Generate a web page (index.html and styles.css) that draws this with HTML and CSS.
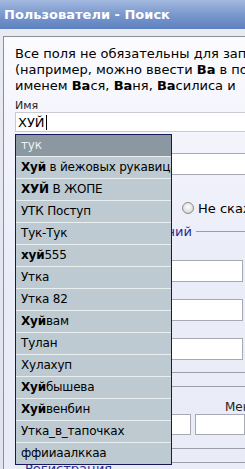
FILE: index.html
```html
<!DOCTYPE html>
<html lang="ru">
<head>
    <meta charset="UTF-8">
    <meta name="viewport" content="width=device-width, initial-scale=1.0">
    <title>Пользователи - Поиск</title>
    <link rel="stylesheet" href="styles.css">
</head>
<body>
    <div class="header">Пользователи - Поиск</div>

    <div class="panel">
        <p class="intro">
            Все поля не обязательны для заполнения<br>
            (например, можно ввести <b>Ва</b> в поле<br>
            именем <b>Ва</b>ся, <b>Ва</b>ня, <b>Ва</b>силиса и
        </p>

        <div class="label">Имя</div>
        <div class="field-wrap">
            <div class="input">ХУЙ<span class="caret"></span></div>

            <!-- подсказки -->
            <ul class="suggest">
                <li class="active">тук</li>
                <li><b>Хуй</b> в йежовых рукавицах</li>
                <li><b>ХУЙ</b> В ЖОПЕ</li>
                <li>УТК Поступ</li>
                <li>Тук-Тук</li>
                <li><b>хуй</b>555</li>
                <li>Утка</li>
                <li>Утка 82</li>
                <li><b>Хуй</b>вам</li>
                <li>Тулан</li>
                <li>Хулахуп</li>
                <li><b>Хуй</b>бышева</li>
                <li><b>Хуй</b>венбин</li>
                <li>Утка_в_тапочках</li>
                <li>ффииаалккаа</li>
            </ul>
        </div>

        <div class="box wide"></div>

        <div class="radio-row">
            <span class="radio"></span>
            <span>Не скажу</span>
        </div>

        <div class="legend-row">
            <span class="legend">заведений</span>
            <span class="rule"></span>
        </div>

        <div class="box short first"></div>
        <div class="box short"></div>
        <div class="box short"></div>

        <div class="line first"></div>
        <div class="line"></div>

        <div class="pair-labels">
            <span class="pair-label">Менее</span>
        </div>
        <div class="pair">
            <div class="box from"></div>
            <div class="box to"></div>
        </div>

        <div class="line"></div>
        <div class="line"></div>

        <a href="#" class="reg-link">Регистрация</a>
    </div>
</body>
</html>
```

FILE: styles.css
```css
* {
    margin: 0;
    padding: 0;
    box-sizing: border-box;
}

body {
    font-family: 'DejaVu Sans', Verdana, sans-serif;
    font-size: 13px;
    color: #000;
    background: linear-gradient(#e9ebf3 0%, #e1e4ee 100%);
    width: 245px;
    height: 469px;
    overflow: hidden;
}

.header {
    height: 29px;
    padding: 1px 0 0 4px;
    line-height: 28px;
    font-weight: bold;
    color: #fff;
    white-space: nowrap;
    background: linear-gradient(#a3b9df 0%, #7e9bcf 45%, #5d80bf 100%);
}

.panel {
    margin: 7px 0 0 3px;
    padding: 9px 0 0 11px;
    height: 440px;
    border-top: 1px solid #8e8e94;
    border-left: 1px solid #8e8e94;
    background: linear-gradient(#fbfbfe 0px, #f1f2fb 120px, #eaecf8 240px, #e9ebf7 100%);
    overflow: hidden;
    white-space: nowrap;
}

.intro {
    line-height: 16px;
    margin-bottom: 6px;
}

.label {
    font-size: 11px;
    line-height: 12px;
    color: #222;
}

.field-wrap {
    position: relative;
}

.input {
    width: 260px;
    height: 20px;
    padding-left: 2px;
    line-height: 19px;
    background: #fff;
    border: 1px solid #c9cbd3;
    border-right: none;
}

.caret {
    display: inline-block;
    width: 1px;
    height: 15px;
    margin-left: 1px;
    vertical-align: -3px;
    background: #000;
}

.suggest {
    position: absolute;
    top: 22px;
    left: 0;
    width: 157px;
    list-style: none;
    border: 1px solid #17175a;
    background: #bdcad2;
    z-index: 10;
}

.suggest li {
    height: 22px;
    padding-left: 5px;
    line-height: 21px;
    font-size: 12px;
    letter-spacing: -0.2px;
    overflow: hidden;
    border-bottom: 1px solid #e9eef1;
}

.suggest li:last-child {
    border-bottom: none;
    height: 21px;
}

.suggest li.active {
    background: #8b97a1;
    color: #eef1f4;
}

.box {
    height: 22px;
    background: #fff;
    border: 1px solid #a9a9b3;
}

.box.wide {
    margin-top: 21px;
    width: 260px;
}

.radio-row {
    display: flex;
    align-items: center;
    gap: 4px;
    width: 320px;
    height: 20px;
    margin-top: 23px;
    padding-left: 167px;
}

.radio {
    flex-shrink: 0;
    width: 12px;
    height: 12px;
    border-radius: 50%;
    border: 1px solid #8d8d8d;
    background: radial-gradient(circle at 50% 40%, #fdfdfd 0%, #e4e4e4 55%, #c2c2c2 100%);
}

.legend-row {
    display: flex;
    align-items: center;
    height: 14px;
    margin-top: 6px;
}

.legend {
    width: 177px;
    text-align: right;
    color: #1f2f94;
    overflow: hidden;
}

.rule {
    flex: 1;
    margin-left: 4px;
    border-top: 1px solid #9c9ca6;
}

.box.short {
    width: 88px;
    margin: 17px 0 0 140px;
}

.box.short.first {
    margin-top: 22px;
}

.line {
    margin-top: 13px;
    width: 260px;
    border-top: 1px solid #9e9ea8;
}

.line.first {
    margin-top: 12px;
}

.pair-labels {
    height: 14px;
    margin-top: 13px;
    padding-left: 210px;
    font-size: 12px;
    line-height: 14px;
    color: #222;
}

.pair {
    display: flex;
    gap: 4px;
    margin-left: 145px;
}

.pair .box {
    height: 21px;
}

.box.from {
    width: 61px;
}

.box.to {
    width: 100px;
}

.reg-link {
    display: block;
    margin-top: -2px;
    padding-left: 10px;
    color: #1f2f94;
    text-decoration: underline;
}
```
